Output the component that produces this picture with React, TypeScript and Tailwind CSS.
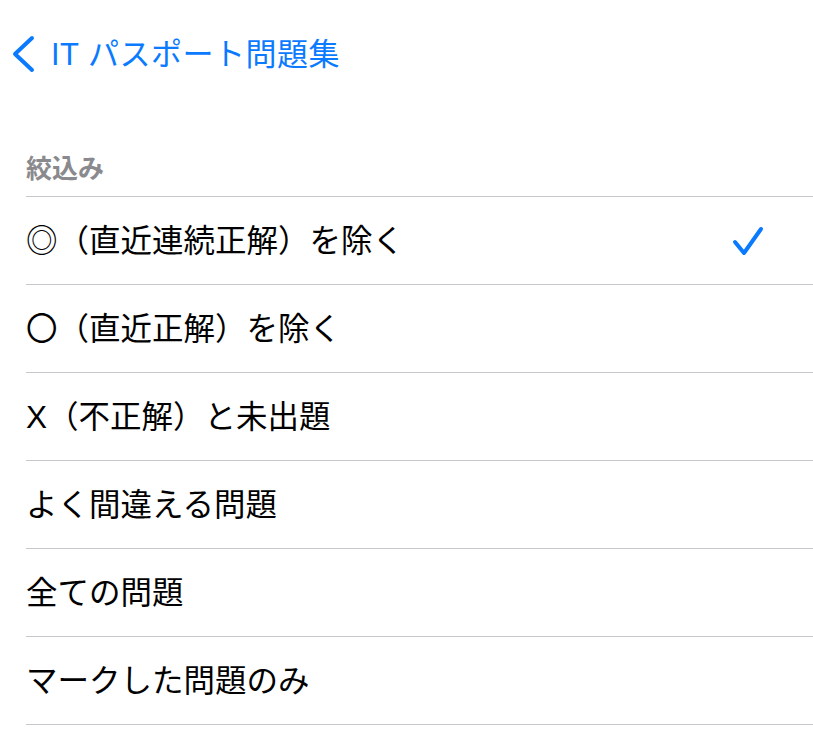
import { useState } from "react";

const filters = [
  "◎（直近連続正解）を除く",
  "〇（直近正解）を除く",
  "X（不正解）と未出題",
  "よく間違える問題",
  "全ての問題",
  "マークした問題のみ",
];

const font = "font-['Liberation_Sans','Noto_Sans_CJK_JP',sans-serif]";

const App = () => {
  const [selected, setSelected] = useState(0);

  return (
    <div className={`min-h-[743px] w-full bg-white ${font}`}>
      <div className="flex h-[106px] items-center pl-[11px] pt-[2px]">
        <button className="flex items-center gap-[14px] text-[#0a7aff]">
          <svg width="26" height="38" viewBox="0 0 26 38" fill="none">
            <path
              d="M21 3 L4 19 L21 35"
              stroke="currentColor"
              strokeWidth="4"
              strokeLinecap="round"
              strokeLinejoin="round"
            />
          </svg>
          <span className="text-[31px] leading-none tracking-[0.5px]">
            IT パスポート問題集
          </span>
        </button>
      </div>

      <div className="pl-[26px]">
        <div className="flex h-[91px] items-end border-b border-[#c8c7cc] pb-[11px]">
          <p className="text-[26px] font-bold leading-[32px] text-[#8a8a8e]">
            絞込み
          </p>
        </div>
        <ul>
          {filters.map((label, i) => (
            <li
              key={label}
              className="flex h-[88px] cursor-pointer items-center justify-between border-b border-[#c8c7cc] pr-[48px] pt-[3px]"
              onClick={() => setSelected(i)}
            >
              <span className="text-[31.5px] leading-none text-black">
                {label}
              </span>
              {selected === i && (
                <svg width="34" height="34" viewBox="0 0 34 34" fill="none">
                  <path
                    d="M4 17 L13 28 L30 4"
                    stroke="#0a7aff"
                    strokeWidth="4"
                    strokeLinecap="round"
                    strokeLinejoin="round"
                  />
                </svg>
              )}
            </li>
          ))}
        </ul>
      </div>
    </div>
  );
};

export default App;
